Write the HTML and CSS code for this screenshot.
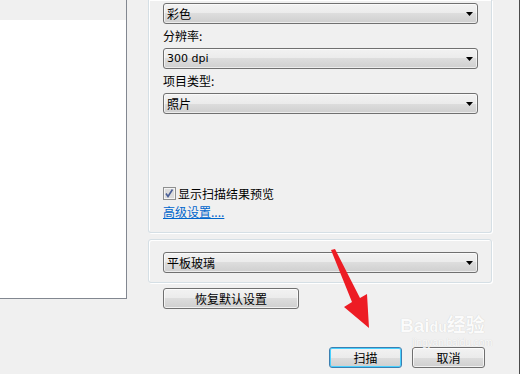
FILE: index.html
```html
<!DOCTYPE html>
<html lang="zh-CN">

<head>
    <meta charset="UTF-8">
    <meta name="viewport" content="width=device-width, initial-scale=1.0">
    <title>新扫描</title>
    <link rel="stylesheet" href="styles.css">
</head>

<body>
    <div class="window">
        <div class="preview">
            <div class="preview-head"></div>
        </div>

        <div class="side">
            <div class="group group-top">
                <div class="combo">
                    <span>彩色</span>
                    <svg class="drop" width="7" height="4" viewBox="0 0 7 4"><path d="M0 0h7L3.5 4z" /></svg>
                </div>
                <div class="label">分辨率:</div>
                <div class="combo">
                    <span class="latin">300 dpi</span>
                    <svg class="drop" width="7" height="4" viewBox="0 0 7 4"><path d="M0 0h7L3.5 4z" /></svg>
                </div>
                <div class="label">项目类型:</div>
                <div class="combo">
                    <span>照片</span>
                    <svg class="drop" width="7" height="4" viewBox="0 0 7 4"><path d="M0 0h7L3.5 4z" /></svg>
                </div>

                <div class="check-row">
                    <svg class="checkbox" width="13" height="13" viewBox="0 0 13 13">
                        <rect x="0.5" y="0.5" width="12" height="12" fill="#f4f4f4" stroke="#8e8f8f" />
                        <rect x="2" y="2" width="9" height="9" fill="#dcdcdc" />
                        <path d="M3 6.5l2 3 4.5-7" fill="none" stroke="#4a5f97" stroke-width="1.6" />
                    </svg>
                    <span>显示扫描结果预览</span>
                </div>
                <a class="link" href="#">高级设置....</a>
            </div>

            <div class="group group-source">
                <div class="combo">
                    <span>平板玻璃</span>
                    <svg class="drop" width="7" height="4" viewBox="0 0 7 4"><path d="M0 0h7L3.5 4z" /></svg>
                </div>
            </div>

            <button class="btn btn-reset">恢复默认设置</button>

            <div class="footer">
                <button class="btn btn-default">扫描</button>
                <button class="btn">取消</button>
            </div>
        </div>
    </div>

    <!-- watermark and annotation lie over the dialog -->
    <div class="watermark">
        <span class="wm-logo">Bai<span class="wm-du">du</span>经验</span>
        <span class="wm-url">jingyan.baidu.com</span>
    </div>
    <svg class="arrow" width="520" height="374" viewBox="0 0 520 374">
        <polygon points="331,250 335,249 360,298 367,294 369,328 344,307 352,302" fill="#ed1c24" />
    </svg>
</body>

</html>
```

FILE: styles.css
```css
body {
    margin: 0;
    padding: 0;
    width: 520px;
    height: 374px;
    overflow: hidden;
    background-color: #f0f0f0;
    font-family: "Noto Sans CJK SC", "DejaVu Sans", sans-serif;
    font-size: 12px;
    color: #000;
    position: relative;
}

.window {
    display: flex;
    height: 374px;
    width: 520px;
    box-sizing: border-box;
    border-right: 1px solid #4b4b4b;
}

.preview {
    width: 127px;
    height: 299px;
    box-sizing: border-box;
    background-color: #fff;
    border-right: 1px solid #828790;
    border-bottom: 1px solid #828790;
}

.preview-head {
    height: 20px;
    background-color: #f0f0f0;
}

.side {
    margin-left: 21px;
    width: 344px;
    display: flex;
    flex-direction: column;
}

.group {
    box-sizing: border-box;
    border: 1px solid #d5dfe5;
    border-radius: 3px;
    box-shadow: inset 1px 1px 0 #fff, 1px 1px 0 #fff;
    padding: 0 13px 0 14px;
}

.group-top {
    height: 233px;
    border-top: none;
    border-radius: 0 0 3px 3px;
    display: flex;
    flex-direction: column;
    padding-top: 3px;
}

.group-source {
    margin-top: 6px;
    height: 44px;
    padding-top: 12px;
}

.combo {
    height: 21px;
    box-sizing: border-box;
    border: 1px solid #707070;
    border-radius: 3px;
    background: linear-gradient(#f2f2f2, #ebebeb 50%, #dddddd 50%, #cfcfcf);
    box-shadow: inset 0 0 0 1px rgba(255, 255, 255, 0.6);
    display: flex;
    align-items: center;
    justify-content: space-between;
    padding: 0 4px 0 3px;
    line-height: 19px;
}

.latin {
    font-family: "DejaVu Sans", sans-serif;
    font-size: 11px;
}

.drop {
    fill: #000;
    margin-top: 1px;
}

.label {
    height: 24px;
    line-height: 24px;
}

.check-row {
    margin-top: 73px;
    height: 13px;
    display: flex;
    align-items: center;
    gap: 2px;
    line-height: 13px;
}

.link {
    margin-top: 5px;
    line-height: 14px;
    color: #0066cc;
    text-decoration: underline;
    align-self: flex-start;
}

.btn {
    height: 21px;
    box-sizing: border-box;
    border: 1px solid #707070;
    border-radius: 3px;
    background: linear-gradient(#f2f2f2, #ebebeb 50%, #dddddd 50%, #cfcfcf);
    box-shadow: inset 0 0 0 1px rgba(255, 255, 255, 0.7);
    font-family: "Noto Sans CJK SC", sans-serif;
    font-size: 12px;
    line-height: 19px;
    padding: 0;
    width: 73px;
    color: #000;
}

.btn-reset {
    margin: 5px 0 0 15px;
    width: 136px;
}

.btn-default {
    border-color: #3c7fb1;
    box-shadow: inset 0 0 0 1px #48d0fe;
}

.footer {
    margin-top: 38px;
    margin-right: 7px;
    display: flex;
    justify-content: flex-end;
    gap: 10px;
}

.watermark {
    position: absolute;
    left: 400px;
    top: 316px;
    display: flex;
    flex-direction: column;
    color: #fbfbfb;
    text-shadow: 0 0 1px rgba(0, 0, 0, 0.18);
    pointer-events: none;
}

.wm-logo {
    font-family: "Liberation Sans", "Noto Sans CJK SC", sans-serif;
    font-weight: bold;
    font-size: 19px;
    line-height: 20px;
}

.wm-du {
    font-size: 14px;
}

.wm-url {
    font-family: "Liberation Sans", sans-serif;
    font-size: 10px;
    line-height: 11px;
    margin-left: 12px;
}

.arrow {
    position: absolute;
    left: 0;
    top: 0;
    pointer-events: none;
}
```
